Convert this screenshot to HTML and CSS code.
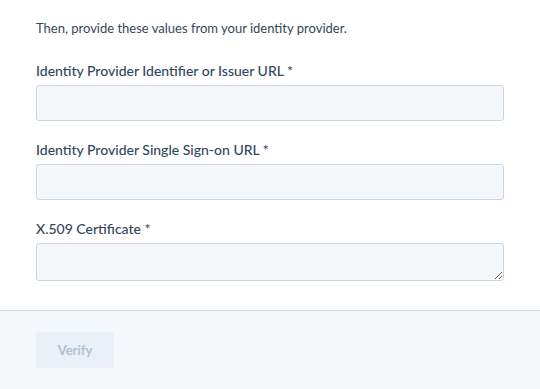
FILE: index.html
```html
<!DOCTYPE html>
<html lang="en">
<head>
    <meta charset="UTF-8">
    <meta name="viewport" content="width=device-width, initial-scale=1.0">
    <title>Identity Provider Setup</title>
    <link rel="stylesheet" href="styles.css">
</head>
<body>
    <!-- Form body -->
    <div class="content">
        <p class="intro">Then, provide these values from your identity provider.</p>

        <div class="field">
            <label class="label" for="issuer">Identity Provider Identifier or Issuer URL *</label>
            <input class="input" type="text" id="issuer">
        </div>

        <div class="field">
            <label class="label" for="sso">Identity Provider Single Sign-on URL *</label>
            <input class="input" type="text" id="sso">
        </div>

        <div class="field">
            <label class="label" for="cert">X.509 Certificate *</label>
            <textarea class="input textarea" id="cert"></textarea>
        </div>
    </div>

    <!-- Footer -->
    <div class="footer">
        <button class="button" disabled>Verify</button>
    </div>
</body>
</html>
```

FILE: styles.css
```css
body {
    margin: 0;
    padding: 0;
    background-color: #ffffff;
    color: #33475b;
    font-family: 'Lato', 'Open Sans', sans-serif;
    height: 389px;
    display: flex;
    flex-direction: column;
}

.content {
    padding: 18px 36px 29px;
    display: flex;
    flex-direction: column;
    gap: 19px;
}

.intro {
    margin: 0 0 4px;
    font-size: 13px;
    line-height: 20px;
}

.field {
    display: flex;
    flex-direction: column;
}

.label {
    font-size: 14px;
    line-height: 20px;
    font-weight: 500;
    margin-bottom: 4px;
}

.input {
    box-sizing: border-box;
    width: 468px;
    height: 36px;
    margin: 0;
    background-color: #f5f8fa;
    border: 1px solid #cbd6e2;
    border-radius: 3px;
    font-family: inherit;
    font-size: 14px;
    color: #33475b;
    padding: 8px 10px;
}

.textarea {
    height: 38px;
    display: block;
    resize: both;
}

.footer {
    flex: 1;
    background-color: #f5f8fa;
    border-top: 1px solid #cbd6e2;
    padding: 21px 36px;
}

.button {
    width: 78px;
    height: 36px;
    background-color: #eaf0f6;
    border: none;
    border-radius: 3px;
    color: #b0c1d4;
    font-family: inherit;
    font-size: 13px;
    font-weight: 700;
    cursor: not-allowed;
}
```
